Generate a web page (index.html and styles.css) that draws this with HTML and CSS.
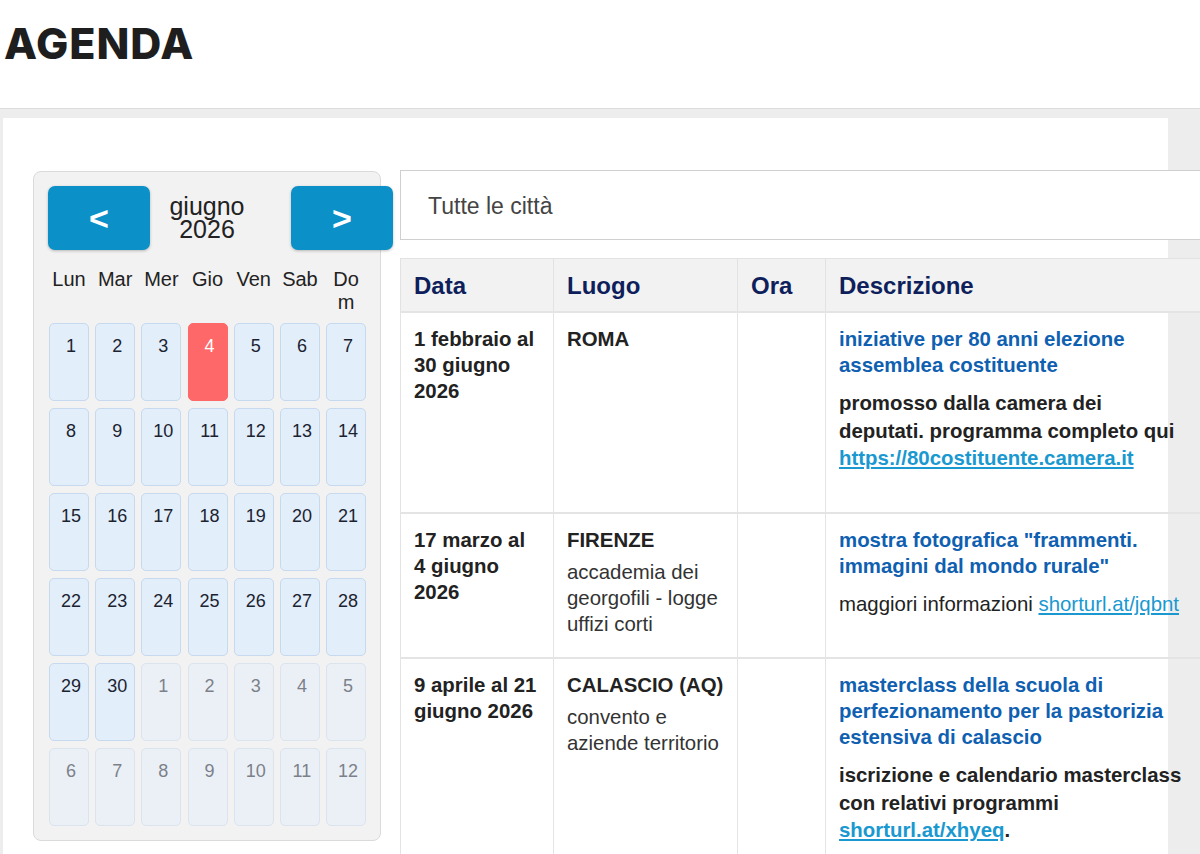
FILE: index.html
```html
<!DOCTYPE html>
<html lang="it">
<head>
<meta charset="utf-8">
<title>Agenda</title>
<link rel="stylesheet" href="styles.css">
</head>
<body>
<header class="site-header">
  <h1 class="site-title">AGENDA</h1>
</header>
<main class="page">
  <div class="container">
    <aside class="calendar">
      <div class="cal-nav">
        <button class="nav-btn">&lt;</button>
        <div class="month">giugno<br>2026</div>
        <button class="nav-btn next">&gt;</button>
      </div>
      <div class="weekdays">
        <span>Lun</span><span>Mar</span><span>Mer</span><span>Gio</span><span>Ven</span><span>Sab</span><span>Dom</span>
      </div>
      <div class="days">
        <div class="day">1</div><div class="day">2</div><div class="day">3</div><div class="day today">4</div><div class="day">5</div><div class="day">6</div><div class="day">7</div>
        <div class="day">8</div><div class="day">9</div><div class="day">10</div><div class="day">11</div><div class="day">12</div><div class="day">13</div><div class="day">14</div>
        <div class="day">15</div><div class="day">16</div><div class="day">17</div><div class="day">18</div><div class="day">19</div><div class="day">20</div><div class="day">21</div>
        <div class="day">22</div><div class="day">23</div><div class="day">24</div><div class="day">25</div><div class="day">26</div><div class="day">27</div><div class="day">28</div>
        <div class="day">29</div><div class="day">30</div><div class="day other">1</div><div class="day other">2</div><div class="day other">3</div><div class="day other">4</div><div class="day other">5</div>
        <div class="day other">6</div><div class="day other">7</div><div class="day other">8</div><div class="day other">9</div><div class="day other">10</div><div class="day other">11</div><div class="day other">12</div>
      </div>
    </aside>
    <section class="events">
      <div class="city-select">Tutte le città</div>
      <table class="agenda">
        <colgroup>
          <col class="c-data"><col class="c-luogo"><col class="c-ora"><col class="c-desc">
        </colgroup>
        <thead>
          <tr><th>Data</th><th>Luogo</th><th>Ora</th><th>Descrizione</th></tr>
        </thead>
        <tbody>
          <tr>
            <td class="date">1 febbraio al 30 giugno 2026</td>
            <td><div class="place">ROMA</div></td>
            <td></td>
            <td>
              <a class="ev-title" href="#">iniziative per 80 anni elezione assemblea costituente</a>
              <p class="ev-text strong">promosso dalla camera dei deputati. programma completo qui <a class="ev-link" href="#">https://80costituente.camera.it</a></p>
            </td>
          </tr>
          <tr>
            <td class="date">17 marzo al 4 giugno 2026</td>
            <td><div class="place">FIRENZE</div><div class="venue">accademia dei georgofili - logge uffizi corti</div></td>
            <td></td>
            <td>
              <a class="ev-title" href="#">mostra fotografica "frammenti. immagini dal mondo rurale"</a>
              <p class="ev-text">maggiori informazioni <a class="ev-link" href="#">shorturl.at/jqbnt</a></p>
            </td>
          </tr>
          <tr>
            <td class="date">9 aprile al 21 giugno 2026</td>
            <td><div class="place">CALASCIO (AQ)</div><div class="venue">convento e aziende territorio</div></td>
            <td></td>
            <td>
              <a class="ev-title" href="#">masterclass della scuola di perfezionamento per la pastorizia estensiva di calascio</a>
              <p class="ev-text strong">iscrizione e calendario masterclass con relativi programmi <a class="ev-link" href="#">shorturl.at/xhyeq</a>.</p>
            </td>
          </tr>
        </tbody>
      </table>
    </section>
  </div>
</main>
</body>
</html>
```

FILE: styles.css
```css
html, body {
  margin: 0;
  padding: 0;
  overflow: hidden;
  background: #eeeeee;
  font-family: "Liberation Sans", Arial, sans-serif;
  color: #222;
}

.site-header {
  height: 108px;
  background: #ffffff;
}

.site-title {
  margin: 0;
  padding: 22px 0 0 4px;
  font-family: Inter, "Liberation Sans", sans-serif;
  font-weight: 800;
  font-size: 43px;
  line-height: 1;
  letter-spacing: 0.9px;
  color: #1e1e1e;
}

.page {
  border-top: 1px solid #dcdcdc;
  padding-top: 9px;
  background: #ededed;
}

.container {
  margin-left: 3px;
  width: 1165px;
  min-height: 760px;
  background: #ffffff;
  box-sizing: border-box;
  padding: 52px 0 0 30px;
  display: flex;
  align-items: flex-start;
  gap: 19px;
}

/* Calendar */
.calendar {
  flex: none;
  width: 348px;
  box-sizing: border-box;
  margin-top: 1px;
  padding: 14px 14px 14px 15px;
  background: #f2f2f2;
  border: 1px solid #dadada;
  border-radius: 8px;
}

.cal-nav {
  display: flex;
  align-items: center;
  height: 64px;
}

.nav-btn {
  flex: none;
  width: 102px;
  height: 64px;
  padding: 0;
  border: none;
  border-radius: 7px;
  background: #0c90c8;
  color: #ffffff;
  font-family: "Liberation Sans", Arial, sans-serif;
  font-weight: 700;
  font-size: 34px;
  line-height: 1;
  box-shadow: 0 1px 3px rgba(0, 0, 0, 0.25);
}

.cal-nav .nav-btn:first-child {
  margin-left: -1px;
}

.nav-btn.next {
  margin-left: 27px;
}

.month {
  flex: none;
  width: 114px;
  text-align: center;
  font-size: 25px;
  line-height: 23px;
  color: #222;
}

.weekdays,
.days {
  display: grid;
  grid-template-columns: repeat(7, 40px);
  column-gap: 6.2px;
}

.weekdays {
  margin-top: 18px;
  font-size: 20px;
  line-height: 23px;
  text-align: center;
  color: #222;
  height: 46px;
  overflow-wrap: anywhere;
}

.days {
  margin-top: 9px;
  row-gap: 7px;
}

.day {
  height: 78px;
  box-sizing: border-box;
  padding: 11px 0 0 4px;
  border: 1px solid #c6d9ee;
  border-radius: 5px;
  background: #e3eefb;
  text-align: center;
  font-size: 18px;
  line-height: 22px;
  color: #1b2330;
}

.day.today {
  background: #ff6868;
  border-color: #ff6868;
  color: #ffffff;
}

.day.other {
  background: #ebf0f7;
  border-color: #dbe4ee;
  color: #7c8189;
}

/* Events */
.events {
  flex: none;
  width: 804px;
}

.city-select {
  height: 70px;
  box-sizing: border-box;
  border: 1px solid #cfcfcf;
  padding: 3px 0 0 27px;
  display: flex;
  align-items: center;
  font-size: 23px;
  color: #444;
  background: #ffffff;
}

.agenda {
  margin-top: 18px;
  width: 100%;
  table-layout: fixed;
  border-collapse: collapse;
}

.c-data { width: 153px; }
.c-luogo { width: 184px; }
.c-ora { width: 88px; }

.agenda th {
  height: 50px;
  padding: 2px 13px 0;
  background: #f2f2f2;
  border: 1px solid #e2e2e2;
  text-align: left;
  font-size: 24px;
  font-weight: 700;
  color: #0e1f5b;
}

.agenda td {
  vertical-align: top;
  padding: 13px 13px 13px;
  border: 1px solid #e4e4e4;
  border-top-width: 2px;
  font-size: 20.4px;
  line-height: 26px;
  color: #222;
}

.agenda td.date {
  font-weight: 700;
}

.place {
  font-weight: 700;
  margin-bottom: 6px;
}

.venue {
  color: #333;
}

.ev-title {
  display: block;
  font-weight: 700;
  color: #0f60b1;
  text-decoration: none;
}

.ev-text {
  margin: 12px 0 26px;
  line-height: 27.5px;
  color: #222;
}

.ev-text.strong {
  font-weight: 700;
}

.ev-link {
  color: #1a98d0;
  text-decoration: underline;
}
```
